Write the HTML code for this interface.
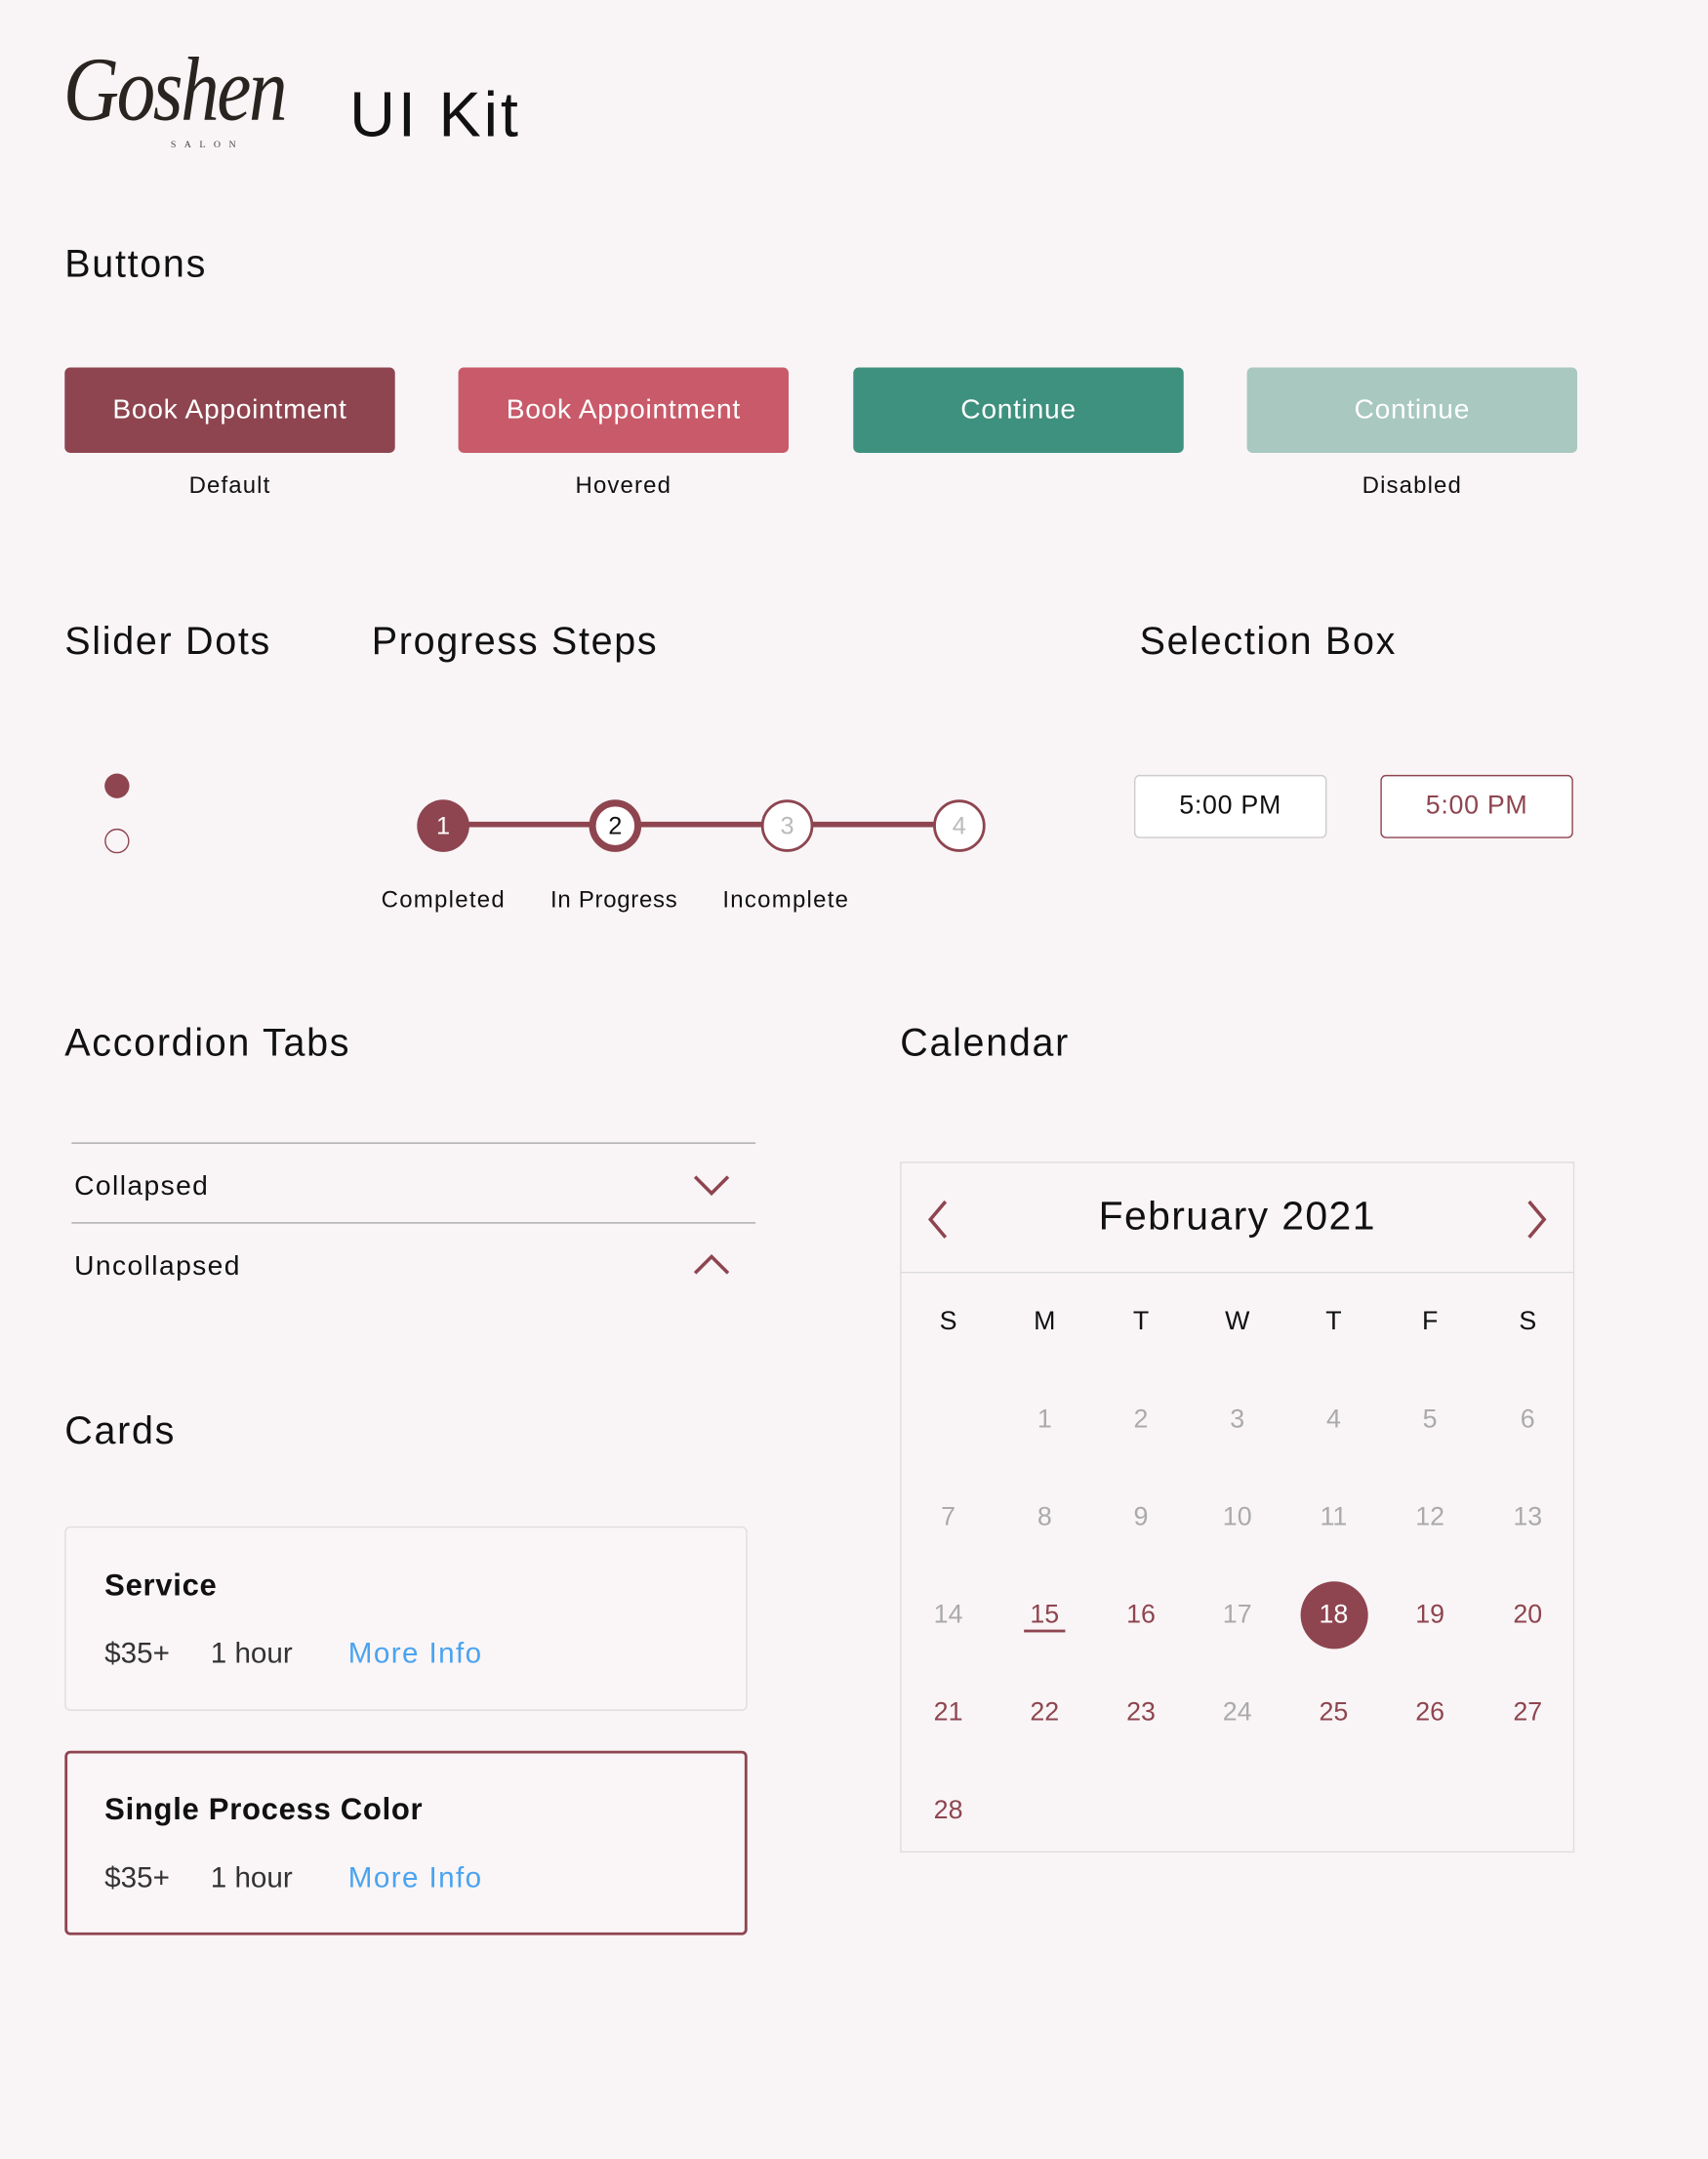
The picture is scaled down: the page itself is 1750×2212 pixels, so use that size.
<!DOCTYPE html>
<html><head><meta charset="utf-8"><style>
html,body{margin:0;padding:0;background:#f9f5f6;}
body{width:1750px;height:2212px;overflow:hidden;}
#w{position:absolute;left:0;top:0;width:1241px;height:1568px;transform:scale(1.41015);transform-origin:0 0;font-family:"Liberation Sans",sans-serif;color:#111;}
.a{position:absolute;}
h2{position:absolute;margin:0;font-weight:400;font-size:28px;letter-spacing:1.2px;}
.btn{position:absolute;width:240px;height:62px;border-radius:4px;color:#fff;font-size:20px;display:flex;align-items:center;justify-content:center;letter-spacing:.5px;}
.lab{position:absolute;font-size:17px;width:240px;text-align:center;letter-spacing:.8px;}
.c{position:absolute;width:34px;height:34px;border-radius:50%;box-sizing:border-box;display:flex;align-items:center;justify-content:center;font-size:18px;}
.sel{position:absolute;width:140px;height:46px;box-sizing:border-box;border-radius:4px;display:flex;align-items:center;justify-content:center;font-size:19px;letter-spacing:.5px;}
.card{position:absolute;left:47px;width:496px;box-sizing:border-box;background:#faf6f7;border-radius:4px;}
.cal{position:absolute;font-size:19px;width:40px;text-align:center;}
.p{position:absolute;font-size:21px;color:#333;}
.m{position:absolute;font-size:21px;color:#4aa3f0;letter-spacing:1px;}
</style></head><body><div id="w">
<div class="a" style="left:46px;top:28px;font-family:'Liberation Serif',serif;font-style:italic;font-size:66px;color:#2a2420;letter-spacing:-2px;transform:scaleX(0.85);transform-origin:0 0">Goshen</div>
<div class="a" style="left:124px;top:101px;font-family:'Liberation Serif',serif;font-size:7px;letter-spacing:6px;color:#444">SALON</div>
<div class="a" style="left:254px;top:56px;font-size:46px;letter-spacing:2px">UI Kit</div>

<h2 style="left:47px;top:176px">Buttons</h2>
<div class="btn" style="left:47px;top:267px;background:#8e4550">Book Appointment</div>
<div class="btn" style="left:333px;top:267px;background:#c85a6a">Book Appointment</div>
<div class="btn" style="left:620px;top:267px;background:#3e917e">Continue</div>
<div class="btn" style="left:906px;top:267px;background:#a8c8c0">Continue</div>
<div class="lab" style="left:47px;top:343px">Default</div>
<div class="lab" style="left:333px;top:343px">Hovered</div>
<div class="lab" style="left:906px;top:343px">Disabled</div>

<h2 style="left:47px;top:450px">Slider Dots</h2>
<h2 style="left:270px;top:450px">Progress Steps</h2>
<h2 style="left:828px;top:450px">Selection Box</h2>
<div class="a" style="left:76px;top:562px;width:18px;height:18px;border-radius:50%;background:#8e4550"></div>
<div class="a" style="left:76px;top:602px;width:18px;height:18px;border-radius:50%;border:1.5px solid #8e4550;box-sizing:border-box"></div>

<div class="a" style="left:320px;top:597px;width:376px;height:4px;background:#8e4550"></div>
<div class="c" style="left:303px;top:581px;width:38px;height:38px;background:#8e4550;color:#fff">1</div>
<div class="c" style="left:428px;top:581px;width:38px;height:38px;background:#fff;border:5px solid #8e4550;color:#111">2</div>
<div class="c" style="left:553px;top:581px;width:38px;height:38px;background:#fff;border:2.5px solid #8e4550;color:#bbb">3</div>
<div class="c" style="left:678px;top:581px;width:38px;height:38px;background:#fff;border:2.5px solid #8e4550;color:#bbb">4</div>
<div class="a" style="left:277px;top:644px;font-size:17px;letter-spacing:.9px">Completed</div>
<div class="a" style="left:400px;top:644px;font-size:17px;letter-spacing:.5px">In Progress</div>
<div class="a" style="left:525px;top:644px;font-size:17px;letter-spacing:.9px">Incomplete</div>

<div class="sel" style="left:824px;top:563px;border:1px solid #ccc;background:#fff">5:00 PM</div>
<div class="sel" style="left:1003px;top:563px;border:1.5px solid #8e4550;background:#fff;color:#8e4550">5:00 PM</div>

<h2 style="left:47px;top:742px">Accordion Tabs</h2>
<div class="a" style="left:52px;top:830px;width:497px;height:1px;background:#aaa"></div>
<div class="a" style="left:52px;top:888px;width:497px;height:1px;background:#aaa"></div>
<div class="a" style="left:54px;top:851px;font-size:20px;letter-spacing:1px">Collapsed</div>
<div class="a" style="left:54px;top:909px;font-size:20px;letter-spacing:1px">Uncollapsed</div>
<svg class="a" style="left:502px;top:852px" width="30" height="20"><path d="M3 3 L15 15 L27 3" fill="none" stroke="#8e4550" stroke-width="2.5"/></svg>
<svg class="a" style="left:502px;top:908px" width="30" height="20"><path d="M3 17 L15 5 L27 17" fill="none" stroke="#8e4550" stroke-width="2.5"/></svg>

<h2 style="left:47px;top:1024px">Cards</h2>
<div class="card" style="top:1109px;height:134px;border:1px solid #e2dcdd"></div>
<div class="a" style="left:76px;top:1139px;font-size:22px;font-weight:700;letter-spacing:.5px">Service</div>
<div class="p" style="left:76px;top:1190px">$35+</div><div class="p" style="left:153px;top:1190px">1 hour</div>
<div class="m" style="left:253px;top:1190px">More Info</div>
<div class="card" style="top:1272px;height:134px;border:2.5px solid #8e4550"></div>
<div class="a" style="left:76px;top:1302px;font-size:22px;font-weight:700;letter-spacing:.5px">Single Process Color</div>
<div class="p" style="left:76px;top:1353px">$35+</div><div class="p" style="left:153px;top:1353px">1 hour</div>
<div class="m" style="left:253px;top:1353px">More Info</div>

<h2 style="left:654px;top:742px">Calendar</h2>
<div class="a" style="left:654px;top:844px;width:490px;height:502px;box-sizing:border-box;border:1px solid #ddd"></div>
<div class="a" style="left:654px;top:924px;width:490px;height:1px;background:#ddd"></div>
<svg class="a" style="left:672px;top:870px" width="20" height="32"><path d="M15 3 L4 16 L15 29" fill="none" stroke="#8e4550" stroke-width="2.5"/></svg>
<svg class="a" style="left:1106px;top:870px" width="20" height="32"><path d="M5 3 L16 16 L5 29" fill="none" stroke="#8e4550" stroke-width="2.5"/></svg>
<div class="a" style="left:654px;top:868px;width:490px;text-align:center;font-size:29px;letter-spacing:1px">February 2021</div>
<div class="a" style="left:945px;top:1149px;width:49px;height:49px;border-radius:50%;background:#8e4550"></div>
<div class="a" style="left:744px;top:1184px;width:30px;height:2px;background:#8e4550"></div>
<div id="cal"></div>
<script>
var xs=[689,759,829,899,969,1039,1110],h='';
'SMTWTFS'.split('').forEach(function(d,i){h+='<div class="cal" style="left:'+(xs[i]-20)+'px;top:950px">'+d+'</div>';});
var ys=[1021,1092,1163,1234,1305];
for(var n=1;n<=28;n++){var p=n,r=Math.floor(p/7),c=p%7;var col='#aaa';
if(n==15||n==16||n==19||n==20||(n>=21&&n!=24))col='#8e4550';if(n==18)col='#fff';
h+='<div class="cal" style="left:'+(xs[c]-20)+'px;top:'+ys[r]+'px;color:'+col+'">'+n+'</div>';}
document.getElementById('cal').innerHTML=h;
</script>
</div></body></html>
